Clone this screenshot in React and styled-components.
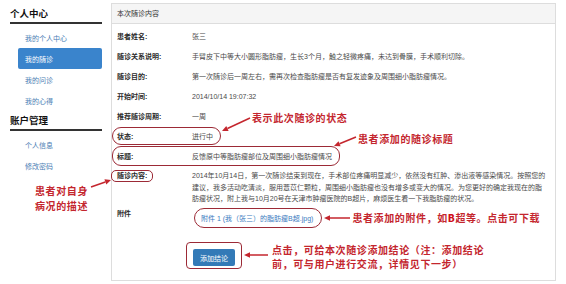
import React from 'react';
import styled, { createGlobalStyle } from 'styled-components';

const RED = '#c4262e';
const RING = '#9c2a36';

const GlobalStyle = createGlobalStyle`
    html, body {
        margin: 0;
        padding: 0;
        background: #ffffff;
    }
    body {
        font-family: "Liberation Sans", "Noto Sans CJK SC", sans-serif;
        color: #333333;
    }
`;

const Page = styled.div`
    display: flex;
    align-items: flex-start;
    width: 566px;
    height: 284px;
    overflow: hidden;
`;

const Sidebar = styled.aside`
    flex-shrink: 0;
    width: 92px;
    padding: 8px 0 0 10px;
`;

const MenuTitle = styled.h3`
    margin: ${props => props.$first ? '0' : '4px'} 0 0;
    padding-bottom: 2px;
    font-size: 9.5px;
    line-height: 12px;
    font-weight: bold;
    color: #111111;
    border-bottom: 2px solid #333333;
`;

const Menu = styled.ul`
    list-style: none;
    margin: 3px 0 0;
    padding: 0;
`;

const MenuItem = styled.li`
    height: 21px;
    margin-left: 8px;
    padding-left: 7px;
    display: flex;
    align-items: center;
    font-size: 7px;
    border-radius: 2px;
    color: ${props => props.$active ? '#ffffff' : '#4a7db3'};
    background: ${props => props.$active ? '#3a84cc' : 'transparent'};
`;

const SideNote = styled.div`
    display: flex;
    align-items: flex-start;
    margin: 8px 0 0 25px;
    position: relative;
    z-index: 1;
`;

const NoteText = styled.div`
    font-family: "Noto Sans CJK SC", sans-serif;
    font-weight: bold;
    font-size: 10px;
    letter-spacing: 0.6px;
    line-height: ${props => props.$lh || 14.5}px;
    color: ${RED};
    white-space: nowrap;
    margin-top: ${props => props.$top || 0}px;
    margin-left: ${props => props.$left || 0}px;

    b {
        color: #d0101a;
    }
`;

const Panel = styled.section`
    position: relative;
    box-sizing: border-box;
    width: 445px;
    margin: 3px 0 0 9px;
    border: 1px solid #dddddd;
`;

const PanelHeader = styled.header`
    height: 19px;
    padding: 0 5px;
    line-height: 19px;
    font-size: 7px;
    color: #333333;
    background: #f5f5f5;
    border-bottom: 1px solid #dddddd;
`;

const PanelBody = styled.div`
    padding: 2px 6px 8px 5px;
`;

const Row = styled.div`
    display: flex;
    align-items: ${props => props.$top ? 'flex-start' : 'center'};
    height: ${props => props.$auto ? 'auto' : '20px'};
    padding-top: ${props => props.$pad || 0}px;
    font-size: 7px;
`;

const Ring = styled.div`
    display: flex;
    align-items: center;
    height: ${props => props.$h || 16}px;
    margin-left: -5px;
    padding: 0 7px 0 4px;
    border: 1px solid ${RING};
    border-radius: 9px;
`;

const Label = styled.div`
    flex-shrink: 0;
    width: 75px;
    font-weight: bold;
    color: #2b2b2b;
    line-height: ${props => props.$lh || 11}px;
    padding-top: ${props => props.$pad || 0}px;
`;

const LabelRing = styled.span`
    display: inline-block;
    margin-left: -6px;
    padding: 0 5px;
    line-height: 10px;
    border: 1px solid ${RING};
    border-radius: 5px;
`;

const Value = styled.div`
    color: #4a4a4a;
    line-height: ${props => props.$lh || 11}px;
    white-space: nowrap;
`;

const AttachRow = styled.div`
    display: flex;
    align-items: center;
    margin-top: 3px;
`;

const LinkOval = styled.a`
    display: inline-flex;
    align-items: center;
    box-sizing: border-box;
    height: 20px;
    margin-left: 2px;
    padding: 0 8px 0 6px;
    border: 1px solid ${RING};
    border-radius: 10px;
    font-size: 7px;
    color: #3a7bc0;
    text-decoration: none;
    white-space: nowrap;
`;

const ActionRow = styled.div`
    display: flex;
    align-items: flex-start;
    margin-top: 14px;
    padding-left: 69px;
`;

const ButtonRing = styled.div`
    padding: 4px 6px 2px;
    border: 1px solid ${RING};
    border-radius: 4px;
`;

const Button = styled.button`
    height: 17px;
    padding: 0 7px;
    border: none;
    border-radius: 2px;
    font-family: inherit;
    font-size: 7px;
    color: #ffffff;
    background: #337ab7;
`;

const Overlay = styled.svg`
    position: absolute;
    left: 0;
    top: 0;
    width: 100%;
    height: 100%;
    pointer-events: none;
    overflow: visible;
`;

const Callout = styled(NoteText)`
    position: absolute;
    left: ${props => props.$x}px;
    top: ${props => props.$y}px;
    line-height: 12px;
`;

const InlineArrow = styled.svg`
    flex-shrink: 0;
    overflow: visible;
    margin-top: ${props => props.$top || 0}px;
    margin-left: ${props => props.$left || 0}px;
`;

function Arrow({ x1, y1, x2, y2 }) {
    const a = Math.atan2(y2 - y1, x2 - x1);
    const len = 6;
    const w = 2.8;
    const bx = x2 - len * Math.cos(a);
    const by = y2 - len * Math.sin(a);
    const px = -Math.sin(a) * w;
    const py = Math.cos(a) * w;

    return (
        <g>
            <line x1={x1} y1={y1} x2={bx} y2={by} stroke={RED} strokeWidth="1.5" />
            <polygon points={`${x2},${y2} ${bx + px},${by + py} ${bx - px},${by - py}`} fill={RED} />
        </g>
    );
}

const rows = [
    ['患者姓名:', '张三'],
    ['随诊关系说明:', '手臂皮下中等大小圆形脂肪瘤，生长3个月，触之轻微疼痛，未达到骨膜，手术顺利切除。'],
    ['随诊目的:', '第一次随诊后一周左右，需再次检查脂肪瘤是否有复发迹象及周围细小脂肪瘤情况。'],
    ['开始时间:', '2014/10/14 19:07:32'],
    ['推荐随诊周期:', '一周'],
];

const App = () => (
    <Page>
        <GlobalStyle />
        <Sidebar>
            <MenuTitle $first>个人中心</MenuTitle>
            <Menu>
                <MenuItem>我的个人中心</MenuItem>
                <MenuItem $active>我的随诊</MenuItem>
                <MenuItem>我的问诊</MenuItem>
                <MenuItem>我的心得</MenuItem>
            </Menu>
            <MenuTitle>账户管理</MenuTitle>
            <Menu>
                <MenuItem>个人信息</MenuItem>
                <MenuItem>修改密码</MenuItem>
            </Menu>
            <SideNote>
                <NoteText>患者对自身<br />病况的描述</NoteText>
                <InlineArrow width="22" height="10" $top={-5} $left={2}>
                    <Arrow x1={1} y1={8} x2={21} y2={1} />
                </InlineArrow>
            </SideNote>
        </Sidebar>

        <Panel>
            <PanelHeader>本次随诊内容</PanelHeader>
            <PanelBody>
                {rows.map(([label, value]) => (
                    <Row key={label}>
                        <Label>{label}</Label>
                        <Value>{value}</Value>
                    </Row>
                ))}
                <Row>
                    <Ring>
                        <Label>状态:</Label>
                        <Value>进行中</Value>
                    </Ring>
                </Row>
                <Row>
                    <Ring $h={18}>
                        <Label>标题:</Label>
                        <Value>反馈原中等脂肪瘤部位及周围细小脂肪瘤情况</Value>
                    </Ring>
                </Row>
                <Row $top $auto $pad={4}>
                    <Label $lh={11.5}><LabelRing>随诊内容:</LabelRing></Label>
                    <Value $lh={11.5}>
                        2014年10月14日，第一次随诊结束到现在，手术部位疼痛明显减少，依然没有红肿、渗出液等感染情况。按照您的<br />
                        建议，我多活动吃清淡，服用薏苡仁颗粒，周围细小脂肪瘤也没有增多或变大的情况。为您更好的确定我现在的脂<br />
                        肪瘤状况，附上我与10月20号在天津市肿瘤医院的B超片，麻烦医生看一下我脂肪瘤的状况。
                    </Value>
                </Row>
                <Row $top $auto>
                    <Label $pad={3}>附件</Label>
                    <AttachRow>
                        <LinkOval href="#">附件 1 (我（张三）的脂肪瘤B超.jpg)</LinkOval>
                        <InlineArrow width="26" height="8" $left={2}>
                            <Arrow x1={26} y1={4} x2={0} y2={4} />
                        </InlineArrow>
                        <NoteText $lh={12} $left={2}>患者添加的附件，如<b>B</b>超等。点击可下载</NoteText>
                    </AttachRow>
                </Row>
                <ActionRow>
                    <ButtonRing>
                        <Button type="button">添加结论</Button>
                    </ButtonRing>
                    <InlineArrow width="24" height="10" $top={8} $left={2}>
                        <Arrow x1={24} y1={5} x2={0} y2={5} />
                    </InlineArrow>
                    <NoteText $top={1} $left={4}>
                        点击，可给本次随诊添加结论（注：添加结论<br />
                        前，可与用户进行交流，详情见下一步）
                    </NoteText>
                </ActionRow>
            </PanelBody>

            <Overlay>
                <Arrow x1={138} y1={114} x2={110} y2={127} />
                <Arrow x1={244} y1={133} x2={222} y2={142} />
            </Overlay>
            <Callout $x={140} $y={108}>表示此次随诊的状态</Callout>
            <Callout $x={246} $y={129}>患者添加的随诊标题</Callout>
        </Panel>
    </Page>
);

export default App;
